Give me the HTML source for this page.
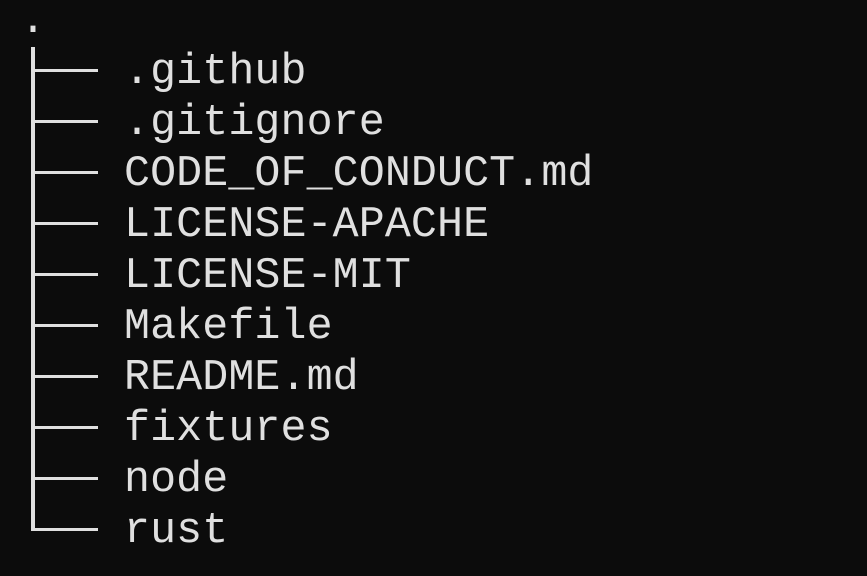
<!DOCTYPE html>
<html><head><style>
html,body{margin:0;padding:0;background:#0c0c0c;width:867px;height:576px;overflow:hidden}
.t{position:absolute;left:124px;font-family:"Liberation Mono",monospace;font-size:43.3px;line-height:51px;color:#e0e0e0;white-space:pre;letter-spacing:0.1px}
.v{position:absolute;left:31px;width:4px;background:#e0e0e0}
.h{position:absolute;left:31px;width:67px;height:3px;background:#e0e0e0}
</style></head><body>
<div class="t" style="left:20px;top:-4px">.</div>
<div class="v" style="top:47px;height:484px"></div>
<div class="h" style="top:69px"></div>
<div class="h" style="top:120px"></div>
<div class="h" style="top:171px"></div>
<div class="h" style="top:222px"></div>
<div class="h" style="top:273px"></div>
<div class="h" style="top:324px"></div>
<div class="h" style="top:375px"></div>
<div class="h" style="top:426px"></div>
<div class="h" style="top:477px"></div>
<div class="h" style="top:528px"></div>
<div class="t" style="top:47px">.github</div>
<div class="t" style="top:98px">.gitignore</div>
<div class="t" style="top:149px">CODE_OF_CONDUCT.md</div>
<div class="t" style="top:200px">LICENSE-APACHE</div>
<div class="t" style="top:251px">LICENSE-MIT</div>
<div class="t" style="top:302px">Makefile</div>
<div class="t" style="top:353px">README.md</div>
<div class="t" style="top:404px">fixtures</div>
<div class="t" style="top:455px">node</div>
<div class="t" style="top:506px">rust</div>
</body></html>
